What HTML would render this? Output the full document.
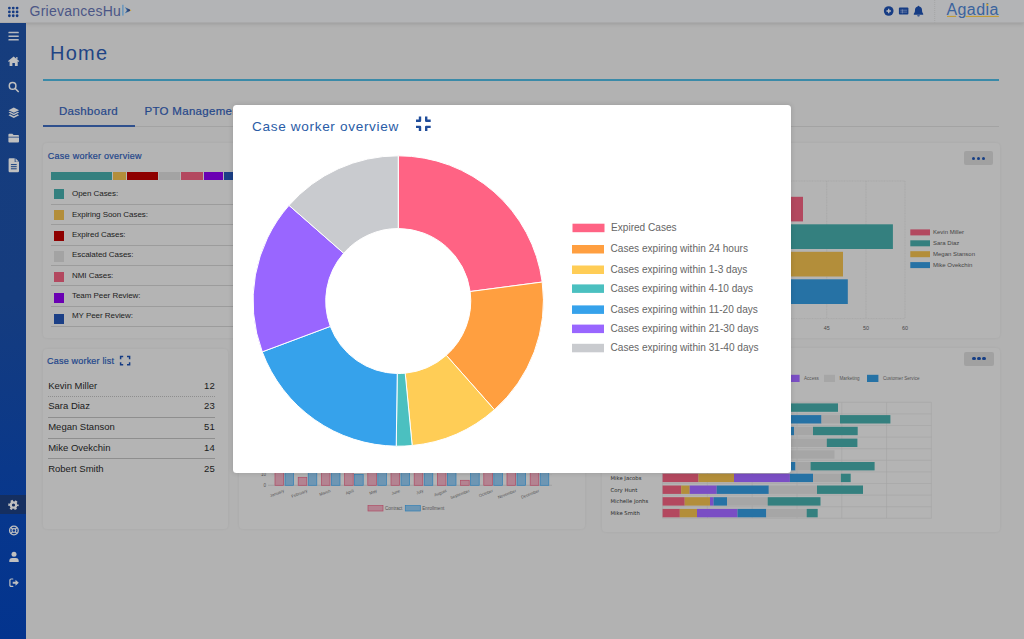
<!DOCTYPE html>
<html lang="en">
<head>
<meta charset="utf-8">
<title>GrievancesHub - Home</title>
<style>
*{box-sizing:border-box;margin:0;padding:0}
html,body{width:1024px;height:639px;overflow:hidden}
body{position:relative;background:#b2b2b2;font-family:"Liberation Sans",Arial,sans-serif;color:#1a1a1a}
.abs{position:absolute}
svg text{font-family:"Liberation Sans",Arial,sans-serif}
#topbar{position:absolute;left:0;top:0;width:1024px;height:23px;background:#b3b4b6;border-bottom:1px solid #aaaaab;box-shadow:0 1px 4px rgba(0,0,0,.13)}
#brand{position:absolute;left:29.5px;top:2.5px;font-size:14px;line-height:17px;letter-spacing:.24px;color:#4b5686;white-space:nowrap}
#agadia{position:absolute;left:946.5px;top:.3px;font-size:16px;line-height:20px;letter-spacing:.4px;color:#3a639d;white-space:nowrap}
#sidebar{position:absolute;left:0;top:23px;width:25.5px;height:616px;background:linear-gradient(180deg,#163d7d 0%,#153c7f 45%,#07378d 80%,#03348e 100%)}
#sidebar .hl{position:absolute;left:0;top:471.5px;width:25.5px;height:19.5px;background:#152f60}
h1{position:absolute;left:50px;top:41px;font-size:20px;line-height:24px;font-weight:400;letter-spacing:1.25px;color:#1f4585;white-space:nowrap}
#hr1{position:absolute;left:43px;top:79px;width:956px;height:2px;background:#3a8aa8}
#tabs{position:absolute;left:43px;top:98px;width:956px;height:29px;border-bottom:1px solid #a3a3a3}
#tabs span{position:absolute;top:6px;font-size:11.5px;line-height:14px;color:#26478a;white-space:nowrap;letter-spacing:.3px;-webkit-text-stroke:.2px #26478a}
#tabs .on{position:absolute;left:0;top:26.7px;width:92px;height:2px;background:#2f508d}
.card{position:absolute;background:#b4b4b4;border-radius:4px;box-shadow:0 0 3px rgba(0,0,0,.06)}
.ct{position:absolute;left:5px;top:9px;font-size:9px;line-height:11px;color:#1f468b;white-space:nowrap;-webkit-text-stroke:.2px #1f468b}
.more{position:absolute;width:29.4px;height:14.1px;border-radius:2px;background:#a1a1a1}
.more i{position:absolute;top:5.4px;width:3.4px;height:3.4px;border-radius:50%;background:#173f85}
#strip{position:absolute;left:8px;top:29px;height:8px;width:200px}
#strip i{position:absolute;top:0;height:8px}
.lg{position:absolute;left:8px;width:330px;height:20.3px;border-bottom:1px solid #9c9c9c;font-size:8px;line-height:10px;color:#1c1c1c;white-space:nowrap}
.sq{position:absolute;left:11px;width:10.2px;height:10.2px}
.lg span{position:absolute;left:21.5px;top:4.5px;letter-spacing:-.05px}
.row{position:absolute;left:5.7px;width:167px;height:20.8px;border-bottom:1px solid #8e8e8e;font-size:9.5px;line-height:12px;color:#1b1b1b;white-space:nowrap}
.row span{position:absolute;left:0;top:3.4px}
.row em{position:absolute;right:0.5px;top:3.4px;font-style:normal}
#modal{position:absolute;left:233px;top:105px;width:558px;height:368px;background:#fff;border-radius:3.5px;box-shadow:0 0 4px 1px rgba(0,0,0,.10)}
#modal h2{position:absolute;left:19px;top:13px;font-size:13.6px;line-height:17px;font-weight:400;letter-spacing:.66px;color:#2a5ca6;white-space:nowrap}
</style>
</head>
<body>
<div id="topbar"><div id="brand" aria-label="GrievancesHub">GrievancesHu</div><div id="agadia">Agadia</div></div>
<div id="sidebar"><div class="hl"></div></div>
<h1>Home</h1>
<div id="hr1"></div>
<div id="tabs"><span style="left:16px">Dashboard</span><span style="left:101.5px">PTO Management</span><div class="on"></div></div>

<div class="card" id="c1" style="left:42.5px;top:143px;width:340px;height:195.2px"><div class="ct" style="letter-spacing:.27px;top:8.2px;left:5.3px">Case worker overview</div><div id="strip"><i style="left:0px;width:61px;background:#34807f"></i><i style="left:62px;width:13px;background:#b38e3a"></i><i style="left:76px;width:31px;background:#8e0000"></i><i style="left:108px;width:21px;background:#a3a3a3"></i><i style="left:130px;width:22px;background:#b3485f"></i><i style="left:153px;width:19px;background:#6a00b3"></i><i style="left:173px;width:16px;background:#1b3f86"></i></div><div class="lg" style="top:41.8px"><span>Open Cases:</span></div><b class="sq" style="top:46.0px;background:#34807f"></b><div class="lg" style="top:62.1px"><span>Expiring Soon Cases:</span></div><b class="sq" style="top:66.8px;background:#b38e3a"></b><div class="lg" style="top:82.4px"><span>Expired Cases:</span></div><b class="sq" style="top:87.6px;background:#8e0000"></b><div class="lg" style="top:102.7px"><span>Escalated Cases:</span></div><b class="sq" style="top:108.4px;background:#a3a3a3"></b><div class="lg" style="top:123.0px"><span>NMI Cases:</span></div><b class="sq" style="top:129.2px;background:#b3485f"></b><div class="lg" style="top:143.3px"><span>Team Peer Review:</span></div><b class="sq" style="top:150.0px;background:#6a00b3"></b><div class="lg" style="top:163.6px"><span>MY Peer Review:</span></div><b class="sq" style="top:170.8px;background:#1b3f86"></b></div>
<div class="card" id="c2" style="left:42.5px;top:349px;width:185.7px;height:179.5px"><div class="ct" style="letter-spacing:.19px;top:6.8px;left:4.6px">Case worker list</div><div class="row" style="top:27.2px;border-bottom-style:dotted;"><span>Kevin Miller</span><em>12</em></div><div class="row" style="top:48.0px;"><span>Sara Diaz</span><em>23</em></div><div class="row" style="top:68.8px;"><span>Megan Stanson</span><em>51</em></div><div class="row" style="top:89.6px;"><span>Mike Ovekchin</span><em>14</em></div><div class="row" style="top:110.4px;border-bottom:none;"><span>Robert Smith</span><em>25</em></div></div>
<div class="card" id="c3" style="left:239px;top:349px;width:346px;height:179.5px"></div>
<div class="card" id="c4" style="left:602px;top:142.5px;width:397.5px;height:195.5px"><div class="more" style="left:361.9px;top:8.8px"><i style="left:7.9px"></i><i style="left:12.95px"></i><i style="left:18px"></i></div></div>
<div class="card" id="c5" style="left:602px;top:348px;width:397.5px;height:184.3px"><div class="more" style="left:362.3px;top:3.6px"><i style="left:7.9px"></i><i style="left:12.95px"></i><i style="left:18px"></i></div></div>
<svg id="pg" class="abs" style="left:0;top:0" width="1024" height="639" viewBox="0 0 1024 639">
<defs><linearGradient id="ga" x1="0" x2="1" y1="0" y2="0"><stop offset="0" stop-color="#4f8fc0"/><stop offset=".45" stop-color="#2c4f8a"/><stop offset=".7" stop-color="#2a3a66"/><stop offset=".82" stop-color="#c9971f"/><stop offset="1" stop-color="#d8a21c"/></linearGradient></defs>
<g fill="#163c84"><circle cx="9.40" cy="8.05" r="1.4"/><circle cx="9.40" cy="11.90" r="1.4"/><circle cx="9.40" cy="15.75" r="1.4"/><circle cx="13.25" cy="8.05" r="1.4"/><circle cx="13.25" cy="11.90" r="1.4"/><circle cx="13.25" cy="15.75" r="1.4"/><circle cx="17.10" cy="8.05" r="1.4"/><circle cx="17.10" cy="11.90" r="1.4"/><circle cx="17.10" cy="15.75" r="1.4"/></g>
<rect x="122" y="4.8" width="1.7" height="10.8" fill="#7099bd"/>
<path d="M124.6,7 L131.5,10.2 L124.6,13.4 L126.9,10.2 Z" fill="url(#ga)"/>
<circle cx="888.7" cy="11" r="4.85" fill="#163c84"/><path d="M886.5,11h4.4M888.7,8.8v4.4" stroke="#bcbdc0" stroke-width="1.3"/>
<rect x="898.9" y="7.6" width="9.5" height="7" rx="1" fill="#163c84"/><path d="M900.3,10.2h6.8M900.3,12.1h6.8M902.4,9.4v4" stroke="#8d9bb8" stroke-width=".6" fill="none"/>
<path d="M918.5,5.7c.5,0 .8,.3 .8,.8c1.8,.4 2.7,1.8 2.7,3.6c0,2 .5,3 1.2,3.7v.9h-9.4v-.9c.7,-.7 1.2,-1.7 1.2,-3.7c0,-1.8 .9,-3.2 2.7,-3.6c0,-.5 .3,-.8 .8,-.8z" fill="#163c84"/><path d="M917.2,15.2h2.6a1.3,1.3 0 0 1 -2.6,0z" fill="#163c84"/>
<path d="M934.7,0v23" stroke="#a4a5a7" stroke-width="1" stroke-dasharray="1 1"/>
<path d="M947,16.4h9.2M965.5,16.4h33.4" stroke="#c29a2c" stroke-width="1"/><rect x="986.3" y="3.7" width="1.9" height="2" fill="#c9a02c"/>
<g fill="#c0c0c0">
<rect x="8.4" y="31.8" width="10.4" height="1.5" rx=".4" fill="#b6b9bf"/>
<rect x="8.4" y="35.45" width="10.4" height="1.5" rx=".4" fill="#b6b9bf"/>
<rect x="8.4" y="39.1" width="10.4" height="1.5" rx=".4" fill="#b6b9bf"/>
<path d="M13.65,56.4 L19.2,61.1 L18.5,61.9 L17.7,61.2 V65.9 H14.9 V62.9 H12.4 V65.9 H9.6 V61.2 L8.8,61.9 L8.1,61.1 Z"/><rect x="16.2" y="57" width="1.3" height="2.4"/>
<path d="M13.8,107.6 L19.1,110.2 L13.8,112.8 L8.5,110.2 Z"/>
<path d="M10,111.7 L8.5,112.6 L13.8,115.3 L19.1,112.6 L17.6,111.7 L13.8,113.7 Z"/>
<path d="M10,114.3 L8.5,115.2 L13.8,117.9 L19.1,115.2 L17.6,114.3 L13.8,116.3 Z"/>
<path d="M8.4,134.8a1,1 0 0 1 1,-1h3l1.2,1.2h4.4a1,1 0 0 1 1,1v.7h-10.6z"/><path d="M8.4,137.4h10.6v4.1a1,1 0 0 1 -1,1h-8.6a1,1 0 0 1 -1,-1z"/>
<path d="M8.6,159.5a1.2,1.2 0 0 1 1.2,-1.2h4.9v3.8h4.3v9a1.2,1.2 0 0 1 -1.2,1.2h-8a1.2,1.2 0 0 1 -1.2,-1.2z"/><path d="M15.5,158.3l3.5,3.5v.0h-3.5z"/>
</g>
<path d="M10.9,164.6h5.8M10.9,166.7h5.8M10.9,168.8h5.8" stroke="#173f7e" stroke-width="1"/>
<circle cx="12.6" cy="85.9" r="3.3" fill="none" stroke="#c0c0c0" stroke-width="1.5"/><path d="M15.2,88.5L18.2,91.5" stroke="#c0c0c0" stroke-width="1.7" stroke-linecap="round"/>
<circle cx="13.5" cy="505" r="3.9" fill="none" stroke="#c0c0c0" stroke-width="2.6" stroke-dasharray="2.04 2.04" stroke-dashoffset="1.02"/><circle cx="13.5" cy="505" r="2.7" fill="none" stroke="#c0c0c0" stroke-width="2.2"/>
<circle cx="13.9" cy="530.5" r="4.3" fill="none" stroke="#c0c0c0" stroke-width="1.3"/><circle cx="13.9" cy="530.5" r="1.9" fill="none" stroke="#c0c0c0" stroke-width="1.1"/><path d="M10.9,527.5l1.6,1.6M16.9,527.5l-1.6,1.6M10.9,533.5l1.6,-1.6M16.9,533.5l-1.6,-1.6" stroke="#c0c0c0" stroke-width="1.4"/>
<circle cx="14" cy="554.3" r="2.5" fill="#c0c0c0"/><path d="M9.3,562v-1.2a2.9,2.9 0 0 1 2.9,-2.9h3.6a2.9,2.9 0 0 1 2.9,2.9v1.2z" fill="#c0c0c0"/>
<path d="M12.8,579h-1.7a1.2,1.2 0 0 0 -1.2,1.2v5a1.2,1.2 0 0 0 1.2,1.2h1.7" fill="none" stroke="#c0c0c0" stroke-width="1.2" stroke-linecap="round"/><path d="M12.7,581.7h2.8v-2l3.3,3l-3.3,3v-2h-2.8z" fill="#c0c0c0"/>
<path d="M120.6,359.2v-2.6h2.6M127,356.6h2.6v2.6M129.6,362.2v2.6h-2.6M123.2,364.8h-2.6v-2.6" fill="none" stroke="#163c84" stroke-width="1.5"/>
<path d="M268,485.3H552" stroke="#9a9a9a" stroke-width=".7"/>
<path d="M271.5,474.6H552" stroke="#a6a6a6" stroke-width=".5"/>
<rect x="275.0" y="455.3" width="8.6" height="30" fill="#b38391" stroke="#b04a64" stroke-width=".7"/>
<rect x="285.0" y="455.3" width="8.6" height="30" fill="#6e96b3" stroke="#2f7fb5" stroke-width=".7"/>
<text x="284.5" y="491.8" font-size="4.2" fill="#555" text-anchor="end" transform="rotate(-21 284.5 491.8)">January</text>
<rect x="298.2" y="477.3" width="8.6" height="8" fill="#b38391" stroke="#b04a64" stroke-width=".7"/>
<rect x="308.2" y="455.3" width="8.6" height="30" fill="#6e96b3" stroke="#2f7fb5" stroke-width=".7"/>
<text x="307.7" y="491.8" font-size="4.2" fill="#555" text-anchor="end" transform="rotate(-21 307.7 491.8)">February</text>
<rect x="321.4" y="455.3" width="8.6" height="30" fill="#b38391" stroke="#b04a64" stroke-width=".7"/>
<rect x="331.4" y="455.3" width="8.6" height="30" fill="#6e96b3" stroke="#2f7fb5" stroke-width=".7"/>
<text x="330.9" y="491.8" font-size="4.2" fill="#555" text-anchor="end" transform="rotate(-21 330.9 491.8)">March</text>
<rect x="344.6" y="455.3" width="8.6" height="30" fill="#b38391" stroke="#b04a64" stroke-width=".7"/>
<rect x="354.6" y="474.3" width="8.6" height="11" fill="#6e96b3" stroke="#2f7fb5" stroke-width=".7"/>
<text x="354.1" y="491.8" font-size="4.2" fill="#555" text-anchor="end" transform="rotate(-21 354.1 491.8)">April</text>
<rect x="367.8" y="455.3" width="8.6" height="30" fill="#b38391" stroke="#b04a64" stroke-width=".7"/>
<rect x="377.8" y="455.3" width="8.6" height="30" fill="#6e96b3" stroke="#2f7fb5" stroke-width=".7"/>
<text x="377.3" y="491.8" font-size="4.2" fill="#555" text-anchor="end" transform="rotate(-21 377.3 491.8)">May</text>
<rect x="391.0" y="455.3" width="8.6" height="30" fill="#b38391" stroke="#b04a64" stroke-width=".7"/>
<rect x="401.0" y="455.3" width="8.6" height="30" fill="#6e96b3" stroke="#2f7fb5" stroke-width=".7"/>
<text x="400.5" y="491.8" font-size="4.2" fill="#555" text-anchor="end" transform="rotate(-21 400.5 491.8)">June</text>
<rect x="414.2" y="455.3" width="8.6" height="30" fill="#b38391" stroke="#b04a64" stroke-width=".7"/>
<rect x="424.2" y="455.3" width="8.6" height="30" fill="#6e96b3" stroke="#2f7fb5" stroke-width=".7"/>
<text x="423.7" y="491.8" font-size="4.2" fill="#555" text-anchor="end" transform="rotate(-21 423.7 491.8)">July</text>
<rect x="437.4" y="455.3" width="8.6" height="30" fill="#b38391" stroke="#b04a64" stroke-width=".7"/>
<rect x="447.4" y="455.3" width="8.6" height="30" fill="#6e96b3" stroke="#2f7fb5" stroke-width=".7"/>
<text x="446.9" y="491.8" font-size="4.2" fill="#555" text-anchor="end" transform="rotate(-21 446.9 491.8)">August</text>
<rect x="460.6" y="480.3" width="8.6" height="5" fill="#b38391" stroke="#b04a64" stroke-width=".7"/>
<rect x="470.6" y="455.3" width="8.6" height="30" fill="#6e96b3" stroke="#2f7fb5" stroke-width=".7"/>
<text x="470.1" y="491.8" font-size="4.2" fill="#555" text-anchor="end" transform="rotate(-21 470.1 491.8)">September</text>
<rect x="483.8" y="455.3" width="8.6" height="30" fill="#b38391" stroke="#b04a64" stroke-width=".7"/>
<rect x="493.8" y="455.3" width="8.6" height="30" fill="#6e96b3" stroke="#2f7fb5" stroke-width=".7"/>
<text x="493.3" y="491.8" font-size="4.2" fill="#555" text-anchor="end" transform="rotate(-21 493.3 491.8)">October</text>
<rect x="507.0" y="455.3" width="8.6" height="30" fill="#b38391" stroke="#b04a64" stroke-width=".7"/>
<rect x="517.0" y="455.3" width="8.6" height="30" fill="#6e96b3" stroke="#2f7fb5" stroke-width=".7"/>
<text x="516.5" y="491.8" font-size="4.2" fill="#555" text-anchor="end" transform="rotate(-21 516.5 491.8)">November</text>
<rect x="530.2" y="455.3" width="8.6" height="30" fill="#b38391" stroke="#b04a64" stroke-width=".7"/>
<rect x="540.2" y="455.3" width="8.6" height="30" fill="#6e96b3" stroke="#2f7fb5" stroke-width=".7"/>
<text x="539.7" y="491.8" font-size="4.2" fill="#555" text-anchor="end" transform="rotate(-21 539.7 491.8)">December</text>
<text x="266" y="476.2" font-size="4.6" fill="#555" text-anchor="end">10</text><text x="266" y="487" font-size="4.6" fill="#555" text-anchor="end">0</text>
<rect x="368" y="505.6" width="15" height="5.4" fill="#b38391" stroke="#b04a64" stroke-width=".7"/><text x="385" y="510.4" font-size="4.6" fill="#555">Contract</text>
<rect x="405.3" y="505.6" width="15" height="5.4" fill="#6e96b3" stroke="#2f7fb5" stroke-width=".7"/><text x="422.3" y="510.4" font-size="4.6" fill="#555">Enrollment</text>
<path d="M787.5,181V318.6M826.7,181V318.6M866,181V318.6M905,181V318.6M780,181H905M780,318.6H905" stroke="#a3a3a3" stroke-width=".6" fill="none" stroke-dasharray="1 .6"/>
<rect x="700" y="196.8" width="103" height="24.6" fill="#b3485f"/>
<rect x="700" y="224.3" width="192.89999999999998" height="24.7" fill="#34807f"/>
<rect x="700" y="251.8" width="143" height="24.7" fill="#b38e3a"/>
<rect x="700" y="279.3" width="147.79999999999995" height="24.7" fill="#2672a5"/>
<text x="826.7" y="330" font-size="5.4" fill="#484848" text-anchor="middle">45</text>
<text x="866" y="330" font-size="5.4" fill="#484848" text-anchor="middle">50</text>
<text x="905" y="330" font-size="5.4" fill="#484848" text-anchor="middle">60</text>
<rect x="910.3" y="229.4" width="19.7" height="6" fill="#b3485f"/><text x="933" y="234.2" font-size="6" fill="#444">Kevin Miller</text>
<rect x="910.3" y="240.3" width="19.7" height="6" fill="#34807f"/><text x="933" y="245.1" font-size="6" fill="#444">Sara Diaz</text>
<rect x="910.3" y="251.2" width="19.7" height="6" fill="#b38e3a"/><text x="933" y="256.0" font-size="6" fill="#444">Megan Stanson</text>
<rect x="910.3" y="262.1" width="19.7" height="6" fill="#2672a5"/><text x="933" y="266.9" font-size="6" fill="#444">Mike Ovekchin</text>
<rect x="780" y="374.8" width="19.6" height="7.2" fill="#7a4ec4"/><text x="804" y="380.2" font-size="4.6" fill="#555">Access</text>
<rect x="824" y="374.8" width="11" height="7.2" fill="#a6a6a6"/><text x="839.5" y="380.2" font-size="4.6" fill="#555">Marketing</text>
<rect x="867" y="374.8" width="11.4" height="7.2" fill="#2672a5"/><text x="883" y="380.2" font-size="4.6" fill="#555">Customer Service</text>
<path d="M662.6,402.3V518.3 M707.4,402.3V518.3 M752.2,402.3V518.3 M797.0,402.3V518.3 M841.8,402.3V518.3 M886.6,402.3V518.3 M931.4,402.3V518.3 M662.6,402.3H931.4 M662.6,413.9H931.4 M662.6,425.5H931.4 M662.6,437.1H931.4 M662.6,448.7H931.4 M662.6,460.3H931.4 M662.6,471.9H931.4 M662.6,483.5H931.4 M662.6,495.1H931.4 M662.6,506.7H931.4 M662.6,518.3H931.4" stroke="#a4a4a4" stroke-width=".6" fill="none"/>
<rect x="700" y="403.4" width="90.0" height="8.4" fill="#34807f"/>
<rect x="790" y="403.4" width="48.0" height="8.4" fill="#34807f"/>
<rect x="700" y="415.1" width="121.5" height="8.4" fill="#2672a5"/>
<rect x="821.5" y="415.1" width="18.5" height="8.4" fill="#a6a6a6"/>
<rect x="840" y="415.1" width="50.4" height="8.4" fill="#34807f"/>
<rect x="700" y="426.8" width="94.0" height="8.4" fill="#2672a5"/>
<rect x="794" y="426.8" width="19.0" height="8.4" fill="#a6a6a6"/>
<rect x="813" y="426.8" width="44.7" height="8.4" fill="#34807f"/>
<rect x="700" y="438.6" width="126.8" height="8.4" fill="#a6a6a6"/>
<rect x="826.8" y="438.6" width="30.6" height="8.4" fill="#34807f"/>
<rect x="700" y="450.3" width="134.5" height="8.4" fill="#a6a6a6"/>
<rect x="700" y="462.0" width="95.5" height="8.4" fill="#2672a5"/>
<rect x="795.5" y="462.0" width="15.1" height="8.4" fill="#a6a6a6"/>
<rect x="810.6" y="462.0" width="64.0" height="8.4" fill="#34807f"/>
<rect x="662.6" y="473.7" width="35.9" height="8.4" fill="#b3485f"/>
<rect x="698.5" y="473.7" width="35.5" height="8.4" fill="#b38e3a"/>
<rect x="734" y="473.7" width="55.9" height="8.4" fill="#7a4ec4"/>
<rect x="789.9" y="473.7" width="23.1" height="8.4" fill="#2672a5"/>
<rect x="813" y="473.7" width="27.9" height="8.4" fill="#a6a6a6"/>
<rect x="840.9" y="473.7" width="9.8" height="8.4" fill="#34807f"/>
<text x="610.5" y="479.9" font-size="5.3" fill="#2a2a2a" style="font-family:'DejaVu Sans',sans-serif">Mike Jacobs</text>
<rect x="662.6" y="485.5" width="18.6" height="8.4" fill="#b3485f"/>
<rect x="681.2" y="485.5" width="8.5" height="8.4" fill="#b38e3a"/>
<rect x="689.7" y="485.5" width="27.0" height="8.4" fill="#7a4ec4"/>
<rect x="716.7" y="485.5" width="52.1" height="8.4" fill="#2672a5"/>
<rect x="768.8" y="485.5" width="48.2" height="8.4" fill="#a6a6a6"/>
<rect x="817" y="485.5" width="46.0" height="8.4" fill="#34807f"/>
<text x="610.5" y="491.7" font-size="5.3" fill="#2a2a2a" style="font-family:'DejaVu Sans',sans-serif">Cory Hunt</text>
<rect x="662.6" y="497.2" width="22.1" height="8.4" fill="#b3485f"/>
<rect x="684.7" y="497.2" width="25.3" height="8.4" fill="#b38e3a"/>
<rect x="710" y="497.2" width="3.6" height="8.4" fill="#7a4ec4"/>
<rect x="713.6" y="497.2" width="13.4" height="8.4" fill="#2672a5"/>
<rect x="727" y="497.2" width="40.7" height="8.4" fill="#a6a6a6"/>
<rect x="767.7" y="497.2" width="52.8" height="8.4" fill="#34807f"/>
<text x="610.5" y="503.4" font-size="5.3" fill="#2a2a2a" style="font-family:'DejaVu Sans',sans-serif">Michelle Jonhs</text>
<rect x="662.6" y="508.9" width="17.2" height="8.4" fill="#b3485f"/>
<rect x="679.8" y="508.9" width="17.2" height="8.4" fill="#b38e3a"/>
<rect x="697" y="508.9" width="40.5" height="8.4" fill="#7a4ec4"/>
<rect x="737.5" y="508.9" width="28.8" height="8.4" fill="#2672a5"/>
<rect x="766.3" y="508.9" width="40.4" height="8.4" fill="#a6a6a6"/>
<rect x="806.7" y="508.9" width="11.0" height="8.4" fill="#34807f"/>
<text x="610.5" y="515.1" font-size="5.3" fill="#2a2a2a" style="font-family:'DejaVu Sans',sans-serif">Mike Smith</text>
</svg>
<div id="modal"><h2>Case worker overview</h2><svg class="abs" style="left:0;top:0" width="558" height="368" viewBox="0 0 558 368"><path d="M165.25,50.80A145.2,145.2 0 0 1 309.21,177.05L237.13,186.54A72.5,72.5 0 0 0 165.25,123.50Z" fill="#ff6384" stroke="#fff" stroke-width="1" stroke-linejoin="round"/>
<path d="M309.21,177.05A145.2,145.2 0 0 1 261.46,304.75L213.29,250.30A72.5,72.5 0 0 0 237.13,186.54Z" fill="#ff9f40" stroke="#fff" stroke-width="1" stroke-linejoin="round"/>
<path d="M261.46,304.75A145.2,145.2 0 0 1 179.17,340.53L172.20,268.17A72.5,72.5 0 0 0 213.29,250.30Z" fill="#ffcd56" stroke="#fff" stroke-width="1" stroke-linejoin="round"/>
<path d="M179.17,340.53A145.2,145.2 0 0 1 163.22,341.19L164.24,268.49A72.5,72.5 0 0 0 172.20,268.17Z" fill="#4bc0c0" stroke="#fff" stroke-width="1" stroke-linejoin="round"/>
<path d="M163.22,341.19A145.2,145.2 0 0 1 29.25,246.85L97.34,221.39A72.5,72.5 0 0 0 164.24,268.49Z" fill="#36a2eb" stroke="#fff" stroke-width="1" stroke-linejoin="round"/>
<path d="M29.25,246.85A145.2,145.2 0 0 1 56.00,100.36L110.70,148.25A72.5,72.5 0 0 0 97.34,221.39Z" fill="#9966ff" stroke="#fff" stroke-width="1" stroke-linejoin="round"/>
<path d="M56.00,100.36A145.2,145.2 0 0 1 165.25,50.80L165.25,123.50A72.5,72.5 0 0 0 110.70,148.25Z" fill="#c9cbcf" stroke="#fff" stroke-width="1" stroke-linejoin="round"/>
<rect x="339.5" y="118.7" width="32" height="8.5" fill="#ff6384"/><text x="378.0" y="126.1" font-size="10.1" fill="#666">Expired Cases</text>
<rect x="339" y="140.0" width="32" height="8.5" fill="#ff9f40"/><text x="377.5" y="147.4" font-size="10.1" fill="#666">Cases expiring within 24 hours</text>
<rect x="339" y="160.5" width="32" height="8.5" fill="#ffcd56"/><text x="377.5" y="167.9" font-size="10.1" fill="#666">Cases expiring within 1-3 days</text>
<rect x="339" y="179.4" width="32" height="8.5" fill="#4bc0c0"/><text x="377.5" y="186.8" font-size="10.1" fill="#666">Cases expiring within 4-10 days</text>
<rect x="339" y="200.4" width="32" height="8.5" fill="#36a2eb"/><text x="377.5" y="207.8" font-size="10.1" fill="#666">Cases expiring within 11-20 days</text>
<rect x="339" y="219.6" width="32" height="8.5" fill="#9966ff"/><text x="377.5" y="227.0" font-size="10.1" fill="#666">Cases expiring within 21-30 days</text>
<rect x="339" y="238.8" width="32" height="8.5" fill="#c9cbcf"/><text x="377.5" y="246.2" font-size="10.1" fill="#666">Cases expiring within 31-40 days</text>
<g fill="none" stroke="#1f4c9a" stroke-width="2.4" stroke-linejoin="round"><path d="M183,15.700000000000003H187V11.400000000000006M197.7,15.700000000000003H193.2V11.400000000000006M183,21.900000000000006H187V26M197.7,21.900000000000006H193.2V26"/></g></svg></div>
</body>
</html>
